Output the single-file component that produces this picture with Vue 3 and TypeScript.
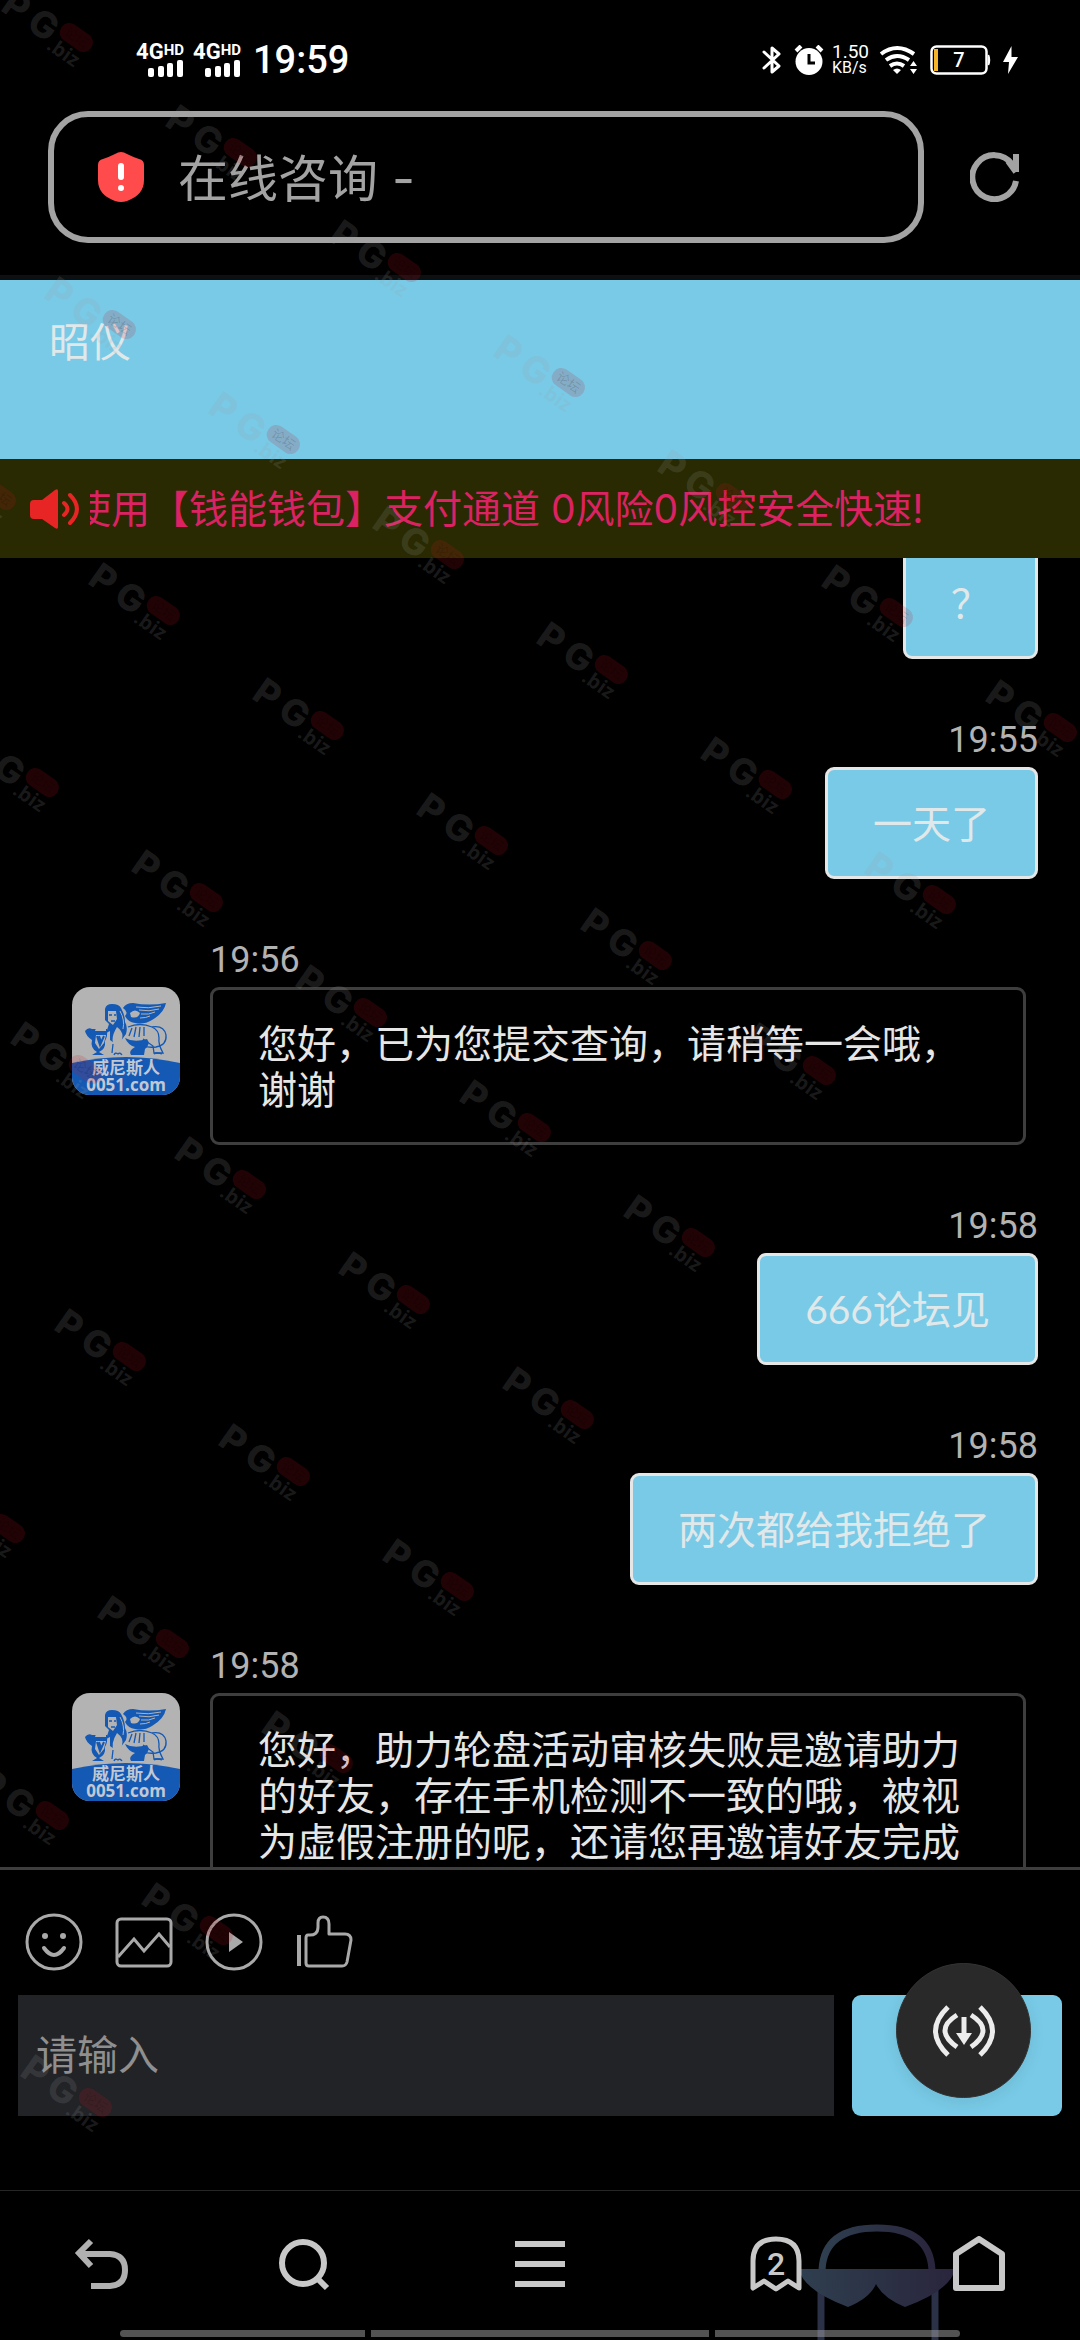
<script setup lang="ts">
import { ref } from 'vue'

interface Message {
  id: number
  side: 'me' | 'agent'
  time?: string
  text: string
}

interface Mark {
  x: number
  y: number
}

const messages: Message[] = [
  { id: 1, side: 'me', text: '？' },
  { id: 2, side: 'me', time: '19:55', text: '一天了' },
  { id: 3, side: 'agent', time: '19:56', text: '您好，已为您提交查询，请稍等一会哦，谢谢' },
  { id: 4, side: 'me', time: '19:58', text: '666论坛见' },
  { id: 5, side: 'me', time: '19:58', text: '两次都给我拒绝了' },
  {
    id: 6,
    side: 'agent',
    time: '19:58',
    text: '您好，助力轮盘活动审核失败是邀请助力的好友，存在手机检测不一致的哦，被视为虚假注册的呢，还请您再邀请好友完成',
  },
]

// Each diagonal run of watermarks: start x, start y, number of marks
const runs: [number, number, number][] = [
  [-1, -10, 7],
  [42, 277, 6],
  [-78, 448, 6],
  [-35, 735, 5],
  [8, 1022, 4],
  [52, 1309, 3],
  [-69, 1481, 3],
  [-25, 1768, 2],
  [18, 2055, 1],
]
const marks: Mark[] = runs.flatMap(([x, y, count]) =>
  Array.from({ length: count }, (_, i) => ({ x: x + i * 164, y: y + i * 115 })),
)

const address = ref('在线咨询 -')
const draft = ref('')
</script>

<template>
  <div class="screen">
    <header class="status">
      <div class="status-left">
        <div v-for="n in 2" :key="n" class="signal">
          <span class="net">4G<small>HD</small></span>
          <svg width="36" height="17" viewBox="0 0 36 17" fill="#fff">
            <rect x="0" y="8" width="6" height="9" rx="2" />
            <rect x="10" y="6" width="6" height="11" rx="2" />
            <rect x="19" y="3" width="6" height="14" rx="2" />
            <rect x="29" y="0" width="6" height="17" rx="2" />
          </svg>
        </div>
        <span class="clock">19:59</span>
      </div>
      <div class="status-right">
        <svg width="20" height="30" viewBox="0 0 20 30" fill="none" stroke="#fff" stroke-width="3" stroke-linejoin="round" stroke-linecap="round">
          <path d="M2 7l15 14-7 6V3l7 6L2 23" />
        </svg>
        <svg width="30" height="30" viewBox="0 0 30 30">
          <circle cx="15" cy="16.500" r="13.500" fill="#fff" />
          <path d="M2 6l5-5M28 6l-5-5" stroke="#fff" stroke-width="4" />
          <path d="M15 9v9h6" fill="none" stroke="#000" stroke-width="3" />
        </svg>
        <span class="rate"><b>1.50</b><i>KB/s</i></span>
        <svg width="39" height="30" viewBox="0 0 39 30" fill="none" stroke="#fff" stroke-width="4">
          <path d="M2 9Q18 -3 35 9" />
          <path d="M7 15Q18 7 30 15" />
          <path d="M11 21Q18 16 25 21" />
          <path d="M14 25Q18 22 22 25L18 29Z" fill="#fff" stroke="none" />
          <path d="M31 21l3.500-5 3.500 5zM31 24l3.500 5 3.500-5z" fill="#fff" stroke="none" />
        </svg>
        <svg width="61" height="30" viewBox="0 0 61 30">
          <rect x="1.500" y="1.500" width="55" height="27" rx="5" fill="none" stroke="#fff" stroke-width="2.500" />
          <rect x="4" y="4" width="4" height="22" fill="#f5b32a" />
          <path d="M58.500 10q2 5 0 10z" fill="#fff" stroke="#fff" stroke-width="1.500" />
          <text x="29" y="22" text-anchor="middle" class="battery-text">7</text>
        </svg>
        <svg width="15" height="28" viewBox="0 0 15 28" fill="#fff">
          <path d="M8.500 0L0 16h6L5 28 15 11H8.500z" />
        </svg>
      </div>
    </header>

    <div class="address">
      <label class="address-box">
        <svg width="46" height="50" viewBox="0 0 46 50">
          <path d="M23 0q3 0 6 2 6 3 12 5 5 1 5 6v15q0 15-17 21-6 2-12 0Q0 43 0 28V13q0-5 5-6 6-2 12-5 3-2 6-2z" fill="#ff4b4b" />
          <rect x="20" y="11" width="6" height="17" rx="3" fill="#fff" />
          <circle cx="23" cy="36" r="3" fill="#fff" />
        </svg>
        <input v-model="address" type="text" aria-label="地址栏" />
      </label>
      <button class="icon-btn" aria-label="刷新">
        <svg width="50" height="50" viewBox="0 0 50 50" fill="none" stroke="#a3a3a3" stroke-width="6">
          <path d="M46 29A22 22 0 1 1 42 12" />
          <path d="M46 2v18M46 20L38 9" />
        </svg>
      </button>
    </div>

    <div class="agent-bar"><h1>昭仪</h1></div>

    <div class="notice">
      <svg width="49" height="42" viewBox="0 0 49 42" fill="none" stroke="#e82525" stroke-width="4" stroke-linecap="round">
        <path d="M4 12h8L25 2q3-2 3 1v36q0 3-3 1L12 31H4q-4 0-4-4V16q0-4 4-4z" fill="#e82525" stroke="none" />
        <path d="M34 15q7 6 0 12M40 7q14 14 0 28" />
      </svg>
      <div class="marquee"><p>使用【钱能钱包】支付通道 0风险0风控安全快速!</p></div>
    </div>

    <main class="chat">
      <ul class="messages">
        <li v-for="m in messages" :key="m.id" class="message" :class="m.side">
          <svg v-if="m.side === 'agent'" class="avatar" width="108" height="108" viewBox="0 0 108 108">
            <rect width="108" height="108" fill="#b3b3b3" />
            <path d="M0 76Q54 64 108 76V108H0Z" fill="#1459b4" />
            <g fill="#1459b4">
              <path d="M33 22q1-5 7-5 7 0 9 4 4 7 4 14 3 5 1 12l-6 8-8-12-6 3 3-9-4-4z" />
              <path d="M51 21q3-5 10-5 16 3 33 0-2 10-14 17-8 5-17 3-7-1-10-7 4-4-2-8z" />
              <path d="M13 44q3-4 7-2h15q1 7-2 12 1 8-6 11l5 3H20l5-3q-7-4-5-12-6-4-7-9z" />
              <path d="M53 51q9 5 22 1 4 5-2 10l-1 6H59q-3-4 4-8-7-2-10-9z" />
              <path d="M38 41q9-1 10 9l-3 8-7-5z" />
            </g>
            <g fill="#b3b3b3">
              <path d="M36 24h8l1 8-4 6-5-4zM45 40q7 5 5 12l-1 9 1 6q-6 3-9 1l1-9q-4-8 3-19z" />
              <path d="M56 41q8-4 18 0v9q-9 3-16 0z" />
              <path d="M24 41q5-5 10-1v4H23z" />
              <path d="M58 26q5-5 10 0-2 6-9 4zM24 48h10l-2 8-5 6-4-6z" />
            </g>
            <g fill="none" stroke="#b3b3b3" stroke-width="1">
              <path d="M64 20q12 2 25-1M67 23q10 2 20-1M69 27q8 1 14-2M68 31q6 0 10-2M48 24q5 9 3 18" />
            </g>
            <g fill="none" stroke="#1459b4" stroke-width="1.300">
              <path d="M56 40q12-5 24 0 7 3 7 11-1 6 4 15h-9l-1-7-10-7M80 40q12-2 14 8 1 10-10 12-9 1-16-2M60 41l-3 8M64 40l-2 10M68 40l-1 10M72 40v9" />
              <path d="M40 66l1-9M42 68q1-3 4-1 2-2 4 1M82 67q3-2 8 0M37 28h3M42 28h2M39 34h4" />
              <path d="M25 49l3 9 4-9M27 49l2 6" stroke-width="2" />
            </g>
            <text x="54" y="87" text-anchor="middle" class="av-cn">威尼斯人</text>
            <text x="54" y="104" text-anchor="middle" class="av-en">0051.com</text>
          </svg>
          <div class="body">
            <time v-if="m.time">{{ m.time }}</time>
            <p class="bubble">{{ m.text }}</p>
          </div>
        </li>
      </ul>
    </main>

    <section class="composer">
      <div class="tools">
        <button class="icon-btn" aria-label="表情">
          <svg width="58" height="58" viewBox="0 0 58 58" fill="none" stroke="#a9a9a9" stroke-width="3">
            <circle cx="29" cy="29" r="27" />
            <path d="M19 35q10 14 20 0" stroke-width="4" stroke-linecap="round" />
            <circle cx="20" cy="23" r="3" fill="#a9a9a9" stroke="none" />
            <circle cx="38" cy="23" r="3" fill="#a9a9a9" stroke="none" />
          </svg>
        </button>
        <button class="icon-btn" aria-label="图片">
          <svg width="58" height="58" viewBox="0 0 58 58" fill="none" stroke="#a9a9a9" stroke-width="3">
            <rect x="2" y="6" width="54" height="47" rx="4" />
            <path d="M3 44l16-18 10 12 15-17 11 13" />
          </svg>
        </button>
        <button class="icon-btn" aria-label="视频">
          <svg width="58" height="58" viewBox="0 0 58 58">
            <circle cx="29" cy="29" r="27" fill="none" stroke="#a9a9a9" stroke-width="3" />
            <path d="M24 19v20l14-10z" fill="#a9a9a9" />
          </svg>
        </button>
        <button class="icon-btn" aria-label="评价">
          <svg width="58" height="58" viewBox="0 0 58 58" fill="none" stroke="#a9a9a9" stroke-width="3" stroke-linejoin="round">
            <path d="M4 22v31" stroke-width="4" />
            <path d="M13 22q10 1 10-8V10q0-6 5-6 6 0 6 7v10h16q6 0 6 6l-4 22q-1 4-5 4H14q-3 0-3-3V25q0-3 2-3z" />
          </svg>
        </button>
      </div>
      <div class="entry">
        <textarea v-model="draft" rows="1" placeholder="请输入" aria-label="消息内容"></textarea>
        <div class="send-wrap">
          <button class="send" aria-label="发送"></button>
          <button class="float" aria-label="下载">
            <svg width="62" height="52" viewBox="0 0 62 52" fill="none" stroke="#ececec" stroke-width="5">
              <path d="M15 2q-25 24 0 48M47 2q25 24 0 48" />
              <path d="M24 10q-24 15 0 32M38 10q24 15 0 32" />
              <path d="M31 12v20" />
              <path d="M23 28h16l-8 12z" fill="#ececec" stroke="none" />
            </svg>
          </button>
        </div>
      </div>
    </section>

    <nav class="nav">
      <svg class="mascot" width="156" height="116" viewBox="0 0 156 116">
        <defs>
          <linearGradient id="mask" x1="0" y1="0" x2="1" y2="0">
            <stop offset="0" stop-color="#2f3f50" />
            <stop offset="1" stop-color="#29253c" />
          </linearGradient>
        </defs>
        <path d="M23 46Q25 4 78 4T133 46" fill="none" stroke="url(#mask)" stroke-width="7" />
        <path d="M22 66v50M136 66v50" fill="none" stroke="#2b3147" stroke-width="7" />
        <path d="M0 45H156Q152 66 106 83 84 74 77 60 71 74 49 83 4 66 0 45Z" fill="url(#mask)" />
      </svg>
      <button class="icon-btn" aria-label="后退">
        <svg width="56" height="56" viewBox="0 0 56 56" fill="none" stroke="#b0b0b0" stroke-width="6">
          <path d="M18 5L6 17l12 13M6 18h31q15 1 15 16t-15 16H18" />
        </svg>
      </button>
      <button class="icon-btn" aria-label="搜索">
        <svg width="56" height="56" viewBox="0 0 56 56" fill="none" stroke="#c8c8c8" stroke-width="6">
          <circle cx="27" cy="27" r="21" />
          <path d="M41 42l10 10" />
        </svg>
      </button>
      <button class="icon-btn" aria-label="菜单">
        <svg width="56" height="56" viewBox="0 0 56 56" fill="#c8c8c8">
          <path d="M3 5h50v6H3zM3 25h50v6H3zM3 45h50v6H3z" />
        </svg>
      </button>
      <button class="icon-btn" aria-label="标签页">
        <svg width="56" height="56" viewBox="0 0 56 56">
          <path d="M5 52V25Q5 3 28 3t23 22v27l-11-7-12 8-12-8z" fill="none" stroke="#c8c8c8" stroke-width="5" stroke-linejoin="round" />
          <text x="28" y="39" text-anchor="middle" class="tab-count">2</text>
        </svg>
      </button>
      <button class="icon-btn" aria-label="主页">
        <svg width="56" height="56" viewBox="0 0 56 56" fill="none" stroke="#c8c8c8" stroke-width="6" stroke-linejoin="round">
          <path d="M5 18L28 3l23 15v34H5z" />
        </svg>
      </button>
      <div class="gesture"><span></span><span></span><span></span></div>
    </nav>

    <svg class="watermark" aria-hidden="true">
      <g v-for="(k, i) in marks" :key="i" :transform="`translate(${k.x} ${k.y + 22}) rotate(35)`">
        <text x="-1" y="-2" class="wm-big">P</text>
        <text x="30" y="-2" class="wm-big">G</text>
        <rect x="60" y="-33" width="36" height="19" rx="9" fill="#d01020" fill-opacity="0.16" />
        <text x="78" y="-19" text-anchor="middle" class="wm-pill">论坛</text>
        <text x="59" y="3" class="wm-biz">.biz</text>
      </g>
    </svg>
  </div>
</template>

<style>
body {
  margin: 0;
  background: #000;
}
</style>

<style scoped>
.screen {
  position: relative;
  display: flex;
  flex-direction: column;
  height: 100vh;
  overflow: hidden;
  background: #000;
  color: #e6e6e6;
  font-family: Inter, "Noto Sans CJK SC", sans-serif;
}

button,
input,
textarea {
  margin: 0;
  padding: 0;
  border: 0;
  background: none;
  color: inherit;
  font-family: inherit;
  outline: none;
}

svg {
  display: block;
  flex: none;
}

.icon-btn {
  display: flex;
  justify-content: center;
  align-items: center;
}

/* Status bar */
.status {
  display: flex;
  justify-content: space-between;
  align-items: center;
  height: 30px;
  padding: 45px 62px 36px 135px;
  color: #fff;
  font-family: Roboto, sans-serif;
}

.status-left,
.status-right {
  display: flex;
  align-items: center;
}

.status-left {
  gap: 8px;
}

.status-right {
  gap: 12px;
}

.signal {
  display: flex;
  flex-direction: column;
  align-items: flex-end;
  width: 49px;
}

.net {
  display: flex;
  align-items: flex-start;
  font-size: 22px;
  line-height: 16px;
  font-weight: 700;
}

.net small {
  font-size: 15px;
  line-height: 12px;
}

.clock {
  margin-left: 4px;
  font-size: 38px;
  line-height: 30px;
  font-weight: 500;
}

.rate {
  display: flex;
  flex-direction: column;
  margin: 0 -2px 0 -4px;
}

.rate b,
.rate i {
  font-size: 19px;
  line-height: 16px;
  font-weight: 400;
  font-style: normal;
}

.rate i {
  font-size: 16px;
}

.battery-text {
  fill: #fff;
  font-size: 20px;
  font-weight: 500;
}

/* Address bar */
.address {
  display: flex;
  align-items: center;
  gap: 46px;
  padding: 0 60px 32px 48px;
  border-bottom: 5px solid #0e0f10;
}

.address-box {
  display: flex;
  flex: 1;
  align-items: center;
  gap: 34px;
  min-width: 0;
  height: 120px;
  padding-left: 44px;
  border: 6px solid #a3a3a3;
  border-radius: 40px;
}

.address-box input {
  flex: 1;
  min-width: 0;
  padding-top: 4px;
  color: #a3a3a3;
  font-size: 50px;
  line-height: 60px;
}

/* Agent name */
.agent-bar {
  min-height: 141px;
  padding: 38px 49px 0;
  background: #78cae6;
}

.agent-bar h1 {
  margin: 0;
  color: #e0e8ea;
  font-size: 41px;
  line-height: 48px;
  font-weight: 400;
}

/* Scrolling notice */
.notice {
  display: flex;
  align-items: center;
  gap: 11px;
  height: 99px;
  padding-left: 30px;
  background: #292a02;
}

.marquee {
  flex: 1;
  overflow: hidden;
}

.marquee p {
  margin: 0 0 0 -18px;
  color: #dc2262;
  font-size: 39px;
  line-height: 46px;
  white-space: nowrap;
}

/* Conversation */
.chat {
  flex: 1;
  min-height: 0;
  overflow: hidden;
}

.messages {
  display: flex;
  flex-direction: column;
  gap: 58px;
  margin: -11px 0 0;
  padding: 0 42px 0 72px;
  list-style: none;
}

.message {
  display: flex;
  gap: 30px;
}

.message.me {
  justify-content: flex-end;
}

.message.agent {
  padding-right: 12px;
}

.avatar {
  margin-top: 50px;
  border-radius: 18px;
}

.av-cn {
  fill: #c2c8d2;
  font-family: "Noto Sans CJK SC", sans-serif;
  font-size: 17px;
  font-weight: 700;
}

.av-en {
  fill: #c2c8d2;
  font-family: "Open Sans", sans-serif;
  font-size: 17px;
  font-weight: 700;
}

.body {
  display: flex;
  flex-direction: column;
  align-items: flex-start;
  gap: 4px;
}

.me .body {
  align-items: flex-end;
}

time {
  color: #b2b2b2;
  font-family: Roboto, sans-serif;
  font-size: 36px;
  line-height: 46px;
}

.bubble {
  margin: 0;
  padding: 30px 45px;
  border: 3px solid #3e3e3e;
  border-radius: 9px;
  color: #e6e6e6;
  font-family: Lato, "Noto Sans CJK SC", sans-serif;
  font-size: 39px;
  line-height: 46px;
}

.me .bubble {
  border-color: #e6e6e6;
  background: #78cae6;
  color: #e0e8ea;
}

/* Composer */
.composer {
  padding: 43px 18px 74px;
  border-top: 3px solid #3e3e3e;
}

.tools {
  display: flex;
  gap: 32px;
  padding: 0 7px 24px;
}

.entry {
  display: flex;
  gap: 18px;
}

.entry textarea {
  flex: 1;
  min-width: 0;
  height: 48px;
  padding: 36px 18px 37px;
  background: #222327;
  font-size: 41px;
  line-height: 48px;
  resize: none;
}

.entry textarea::placeholder {
  color: #8f8f90;
  opacity: 1;
}

.send-wrap {
  position: relative;
  display: flex;
  width: 210px;
}

.send {
  flex: 1;
  border-radius: 9px;
  background: #78cae6;
}

.float {
  position: absolute;
  top: -32px;
  right: 31px;
  display: flex;
  justify-content: center;
  align-items: center;
  width: 135px;
  height: 135px;
  border: 1px solid #333;
  border-radius: 50%;
  background: #292929;
  box-shadow: 0 4px 16px rgba(0, 0, 0, 0.08);
}

/* Browser navigation */
.nav {
  position: relative;
  display: grid;
  grid-template-columns: 3fr 3fr 4fr 3fr 3fr;
  height: 146px;
  padding-bottom: 3px;
  border-top: 1px solid #262626;
}

.nav .icon-btn {
  position: relative;
}

.mascot {
  position: absolute;
  right: 125px;
  bottom: 0;
}

.tab-count {
  fill: #c8c8c8;
  font-family: Roboto, sans-serif;
  font-size: 32px;
  font-weight: 500;
}

.gesture {
  position: absolute;
  right: 120px;
  bottom: 3px;
  left: 120px;
  display: grid;
  grid-template-columns: 245fr 338fr 245fr;
  gap: 6px;
}

.gesture span {
  height: 7px;
  background: rgba(160, 160, 160, 0.52);
}

.gesture span:first-child {
  border-radius: 4px 0 0 4px;
}

.gesture span:last-child {
  border-radius: 0 4px 4px 0;
}

/* Watermark layer */
.watermark {
  position: absolute;
  inset: 0;
  width: 100%;
  height: 100%;
  pointer-events: none;
}

.wm-big,
.wm-biz {
  fill: #a0a0a0;
  fill-opacity: 0.16;
}

.wm-big {
  font-size: 37px;
  font-weight: 800;
}

.wm-biz {
  font-family: "Open Sans", sans-serif;
  font-size: 20px;
  font-weight: 700;
}

.wm-pill {
  fill: #000;
  fill-opacity: 0.15;
  font-size: 13px;
}
</style>
